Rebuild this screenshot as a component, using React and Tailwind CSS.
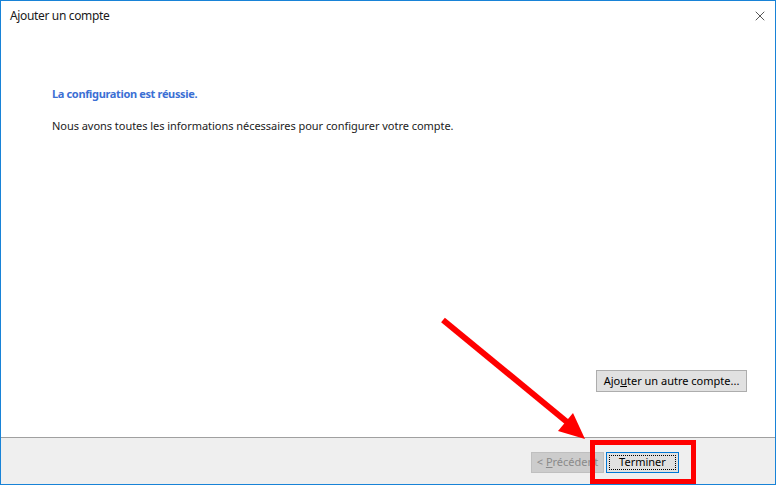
import { X } from 'lucide-react';

const font = { fontFamily: '"Noto Sans", "Open Sans", sans-serif' };

function Arrow() {
    return (
        <svg className="absolute left-0 top-0 pointer-events-none" width="776" height="485">
            <line x1="442" y1="319" x2="566" y2="421" stroke="#ff0000" strokeWidth="6" />
            <polygon points="557,430 572,412 584,438" fill="#ff0000" />
        </svg>
    );
}

export default function App() {
    return (
        <div
            className="relative w-[776px] h-[485px] bg-white border border-[#1883d7] flex flex-col text-[#1a1a1a]"
            style={font}
        >
            <header className="h-[30px] flex items-center justify-between pl-[9px] pr-[7px]">
                <h1 className="text-[12px] tracking-[-0.35px]">Ajouter un compte</h1>
                <X size={16} strokeWidth={1} className="text-black" />
            </header>

            <main className="flex-1 flex flex-col pl-[51px] pr-[28px] pt-[56px] pb-[45px]">
                <p className="text-[11px] font-bold text-[#3b6fd4] leading-[14px] tracking-[-0.35px]">La configuration est réussie.</p>
                <p className="text-[11px] mt-[18px] leading-[14px] text-[#222] tracking-[-0.04px]">
                    Nous avons toutes les informations nécessaires pour configurer votre compte.
                </p>
                <div className="flex-1" />
                <div className="flex justify-end">
                    <button className="w-[151px] h-[22px] bg-[#e1e1e1] border border-[#adadad] text-[11px] text-black">
                        Ajo<span className="underline">u</span>ter un autre compte...
                    </button>
                </div>
            </main>

            <footer className="h-[47px] bg-[#efefef] border-t border-[#a0a0a0] flex items-start pt-[14px] pl-[530px]">
                <button className="w-[73px] h-[21px] bg-[#cccccc] border border-[#bfbfbf] text-[11px] text-[#8a8a8a]">
                    &lt; <span className="underline">P</span>récédent
                </button>
                <button className="ml-[2px] w-[73px] h-[21px] bg-[#e1e1e1] border border-[#0078d7] p-[2px]">
                    <span className="flex items-center justify-center w-full h-full border border-dotted border-black text-[11px] text-black">
                        Terminer
                    </span>
                </button>
            </footer>

            <div className="absolute left-[589px] top-[439px] w-[106px] h-[44px] border-[5px] border-[#ff0000] pointer-events-none" />
            <Arrow />
        </div>
    );
}
